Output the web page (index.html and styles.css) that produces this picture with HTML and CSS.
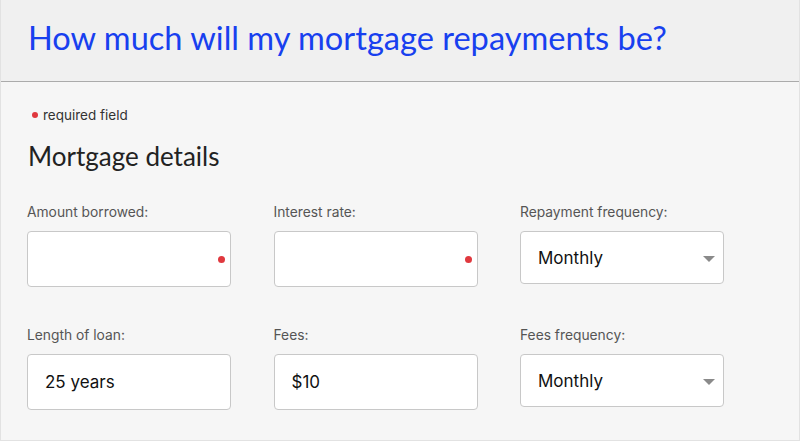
FILE: index.html
```html
<!DOCTYPE html>
<html lang="en">
<head>
<meta charset="utf-8">
<title>Mortgage repayments calculator</title>
<link rel="stylesheet" href="styles.css">
</head>
<body>
<div class="calc">
  <header class="calc-head">
    <h1 class="calc-title">How much will my mortgage repayments be?</h1>
  </header>
  <section class="calc-body">
    <p class="req"><span class="req-dot"></span>required field</p>
    <h2 class="section-title">Mortgage details</h2>
    <div class="fields">
      <div class="field">
        <label class="field-label" for="amount">Amount borrowed:</label>
        <div class="control control-required">
          <input class="text-input" id="amount" type="text" value="">
        </div>
      </div>
      <div class="field">
        <label class="field-label" for="rate">Interest rate:</label>
        <div class="control control-required">
          <input class="text-input" id="rate" type="text" value="">
        </div>
      </div>
      <div class="field">
        <label class="field-label" for="freq">Repayment frequency:</label>
        <div class="control control-select">
          <select class="select-input" id="freq"><option>Monthly</option><option>Fortnightly</option><option>Weekly</option></select>
        </div>
      </div>
      <div class="field">
        <label class="field-label" for="length">Length of loan:</label>
        <div class="control">
          <input class="text-input" id="length" type="text" value="25 years">
        </div>
      </div>
      <div class="field">
        <label class="field-label" for="fees">Fees:</label>
        <div class="control">
          <input class="text-input" id="fees" type="text" value="$10">
        </div>
      </div>
      <div class="field">
        <label class="field-label" for="feesfreq">Fees frequency:</label>
        <div class="control control-select">
          <select class="select-input" id="feesfreq"><option>Monthly</option><option>Fortnightly</option><option>Weekly</option></select>
        </div>
      </div>
    </div>
  </section>
</div>
</body>
</html>
```

FILE: styles.css
```css
* { box-sizing: border-box; }

html, body {
  margin: 0;
  padding: 0;
  background: #ffffff;
}

.calc {
  width: 800px;
  border: 1px solid #e2e2e2;
  border-top: 0;
}

.calc-head {
  height: 82px;
  background: #f0f0f0;
  border-bottom: 1px solid #ababab;
  padding: 18px 0 0 27px;
}

.calc-title {
  margin: 0;
  font-family: "Lato", "Noto Sans", sans-serif;
  font-weight: 400;
  font-size: 32.6px;
  line-height: 40px;
  color: #1840ef;
  white-space: nowrap;
}

.calc-body {
  background: #f6f6f6;
  padding: 23px 26px 30px 26px;
}

.req {
  margin: 0;
  display: flex;
  align-items: center;
  font-family: "Inter", "Open Sans", sans-serif;
  font-size: 13.5px;
  line-height: 20px;
  color: #333333;
  padding-left: 5px;
}

.req-dot {
  width: 6px;
  height: 6px;
  border-radius: 50%;
  background: #e0383e;
  margin-right: 5px;
}

.section-title {
  margin: 14px 0 0 1px;
  font-family: "Lato", "Noto Sans", sans-serif;
  font-weight: 400;
  font-size: 26px;
  line-height: 34px;
  color: #222222;
}

.fields {
  margin-top: 29px;
  display: grid;
  grid-template-columns: 204px 204px 204px;
  column-gap: 42.5px;
  row-gap: 38px;
  align-items: start;
}

.field-label {
  display: block;
  font-family: "Inter", "Open Sans", sans-serif;
  font-size: 13.8px;
  line-height: 20px;
  color: #555555;
  margin-bottom: 9px;
}

.control {
  position: relative;
  height: 56px;
}

.control-select {
  height: 53px;
}

.text-input,
.select-input {
  display: block;
  width: 100%;
  height: 100%;
  margin: 0;
  border: 1px solid #c8c8c8;
  border-radius: 4px;
  background: #ffffff;
  padding: 0 17px;
  font-family: "Inter", "Open Sans", sans-serif;
  font-size: 17px;
  color: #111111;
  outline: none;
}

.select-input {
  -webkit-appearance: none;
  appearance: none;
}

.control-required::after {
  content: "";
  position: absolute;
  right: 6px;
  top: 50%;
  width: 7px;
  height: 7px;
  margin-top: -3.5px;
  border-radius: 50%;
  background: #e0383e;
}

.control-select::after {
  content: "";
  position: absolute;
  right: 9px;
  top: 50%;
  margin-top: -2px;
  border-left: 6px solid transparent;
  border-right: 6px solid transparent;
  border-top: 6px solid #8a8a8a;
}
```
